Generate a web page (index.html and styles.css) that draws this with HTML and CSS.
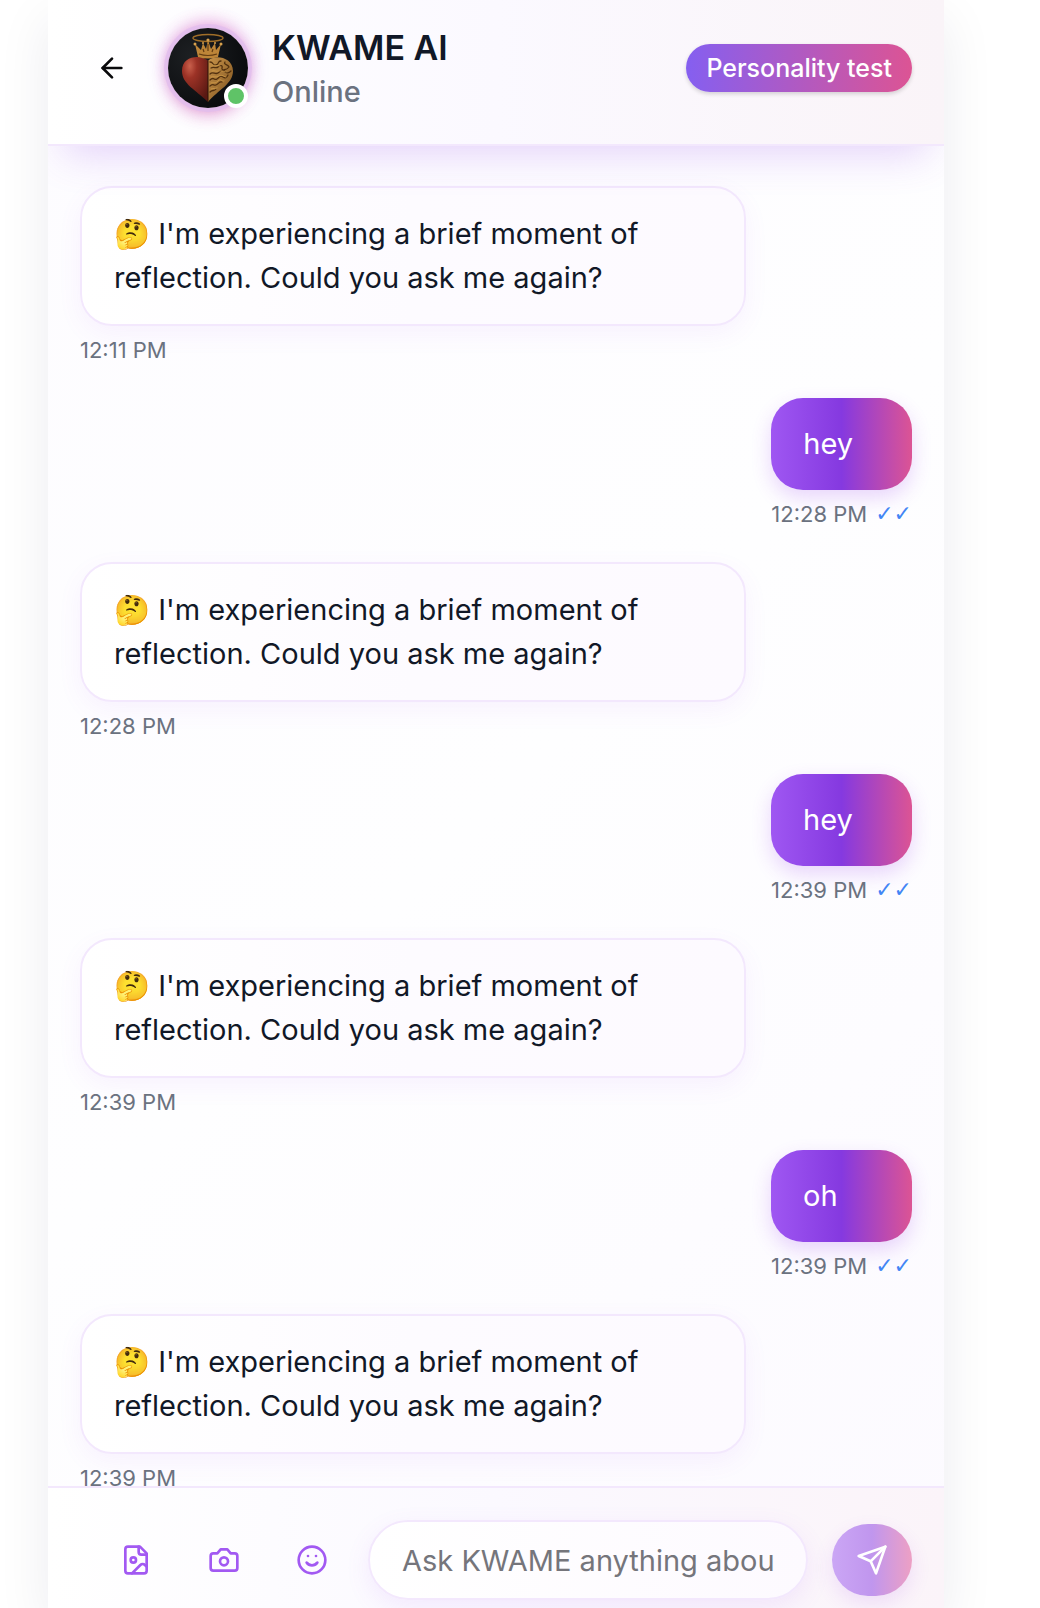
FILE: index.html
```html
<!DOCTYPE html>
<html lang="en">
<head>
<meta charset="utf-8">
<meta name="viewport" content="width=device-width, initial-scale=1">
<title>KWAME AI</title>
<link rel="stylesheet" href="styles.css">
</head>
<body>
<div class="app">
  <header class="header">
    <button class="icon-button back" type="button" aria-label="Back">
      <svg class="icon" viewBox="0 0 24 24"><path d="m12 19-7-7 7-7"/><path d="M19 12H5"/></svg>
    </button>
    <div class="avatar">
      <svg class="portrait" viewBox="0 0 80 80" aria-hidden="true">
        <defs>
          <radialGradient id="ground" cx=".3" cy=".35" r=".8"><stop offset="0" stop-color="#1d2023"/><stop offset="1" stop-color="#08090b"/></radialGradient>
          <radialGradient id="red" cx=".3" cy=".2" r=".9"><stop offset="0" stop-color="#c9604c"/><stop offset=".3" stop-color="#9c3226"/><stop offset="1" stop-color="#581812"/></radialGradient>
          <linearGradient id="gold" x1="0" y1="0" x2="1" y2="1"><stop offset="0" stop-color="#c8934a"/><stop offset="1" stop-color="#7d521e"/></linearGradient>
        </defs>
        <circle cx="40" cy="40" r="40" fill="url(#ground)"/>
        <path d="M40 33C35 27 14 26 14 43c0 13 14 19 26 31z" fill="url(#red)"/>
        <path d="M40 33c6-7 25-4 25 10 0 13-15 19-25 31z" fill="url(#gold)"/>
        <g fill="none" stroke="#51300f" stroke-width="1.3" stroke-linecap="round">
          <path d="M42 34c4 0 2 4 6 3s1-4 5-4M43 40c3-2 5 1 7-1s5-2 4 1 5 2 7-1M42 46c3-3 5 1 8-1s3-4 6-2 4 3 7 0M42 52c4-4 4 1 7-1s3-4 6-2 4 0 5-2M42 58c4-3 3 0 6-1s3-4 6-3M42 64c3-3 4 0 6-3M57 34c-2 3 3 2 4 5"/>
        </g>
        <g fill="none" stroke="#d5a04a" stroke-width=".7" stroke-linecap="round">
          <path d="M44 37c3 1 5 0 8 1M44 43c3-1 4 1 7 0s5 1 8 1M43 49c3-1 5 1 8-1s5 1 7 1M43 55c3-1 4 1 7-2s4 1 6 0M43 61c3-1 4 0 6-1"/>
        </g>
        <path d="M40 33v41" stroke="#2d1208" stroke-width="1"/>
        <ellipse cx="40" cy="10" rx="15" ry="3.500" fill="none" stroke="#a06e28" stroke-width="1.400"/>
        <path d="m30 29-3-13 6 6 2-7 3 6 2-9 3 9 4-6 1 7 5-6-3 13q-10 3-20 0z" fill="#bd8538"/>
        <path d="M31 26q9 3 18 0M35 21l1 3m4-8v7m5-2-1 3" fill="none" stroke="#633c12" stroke-width="1.200"/>
        <g fill="#d6a04d"><circle cx="27" cy="16" r="1.500"/><circle cx="35" cy="15" r="1"/><circle cx="40" cy="12" r="1.600"/><circle cx="47" cy="15" r="1"/><circle cx="53" cy="16" r="1.500"/></g>
      </svg>
      <span class="presence"></span>
    </div>
    <div class="identity">
      <h1 class="name">KWAME AI</h1>
      <p class="status">Online</p>
    </div>
    <button class="test-button" type="button">Personality test</button>
  </header>

  <main class="messages">
    <article class="message received">
      <p class="bubble">🤔 I'm experiencing a brief moment of reflection. Could you ask me again?</p>
      <p class="meta"><time>12:11 PM</time></p>
    </article>
    <article class="message sent">
      <p class="bubble">hey</p>
      <p class="meta"><time>12:28 PM</time><span class="ticks">✓✓</span></p>
    </article>
    <article class="message received">
      <p class="bubble">🤔 I'm experiencing a brief moment of reflection. Could you ask me again?</p>
      <p class="meta"><time>12:28 PM</time></p>
    </article>
    <article class="message sent">
      <p class="bubble">hey</p>
      <p class="meta"><time>12:39 PM</time><span class="ticks">✓✓</span></p>
    </article>
    <article class="message received">
      <p class="bubble">🤔 I'm experiencing a brief moment of reflection. Could you ask me again?</p>
      <p class="meta"><time>12:39 PM</time></p>
    </article>
    <article class="message sent">
      <p class="bubble">oh</p>
      <p class="meta"><time>12:39 PM</time><span class="ticks">✓✓</span></p>
    </article>
    <article class="message received">
      <p class="bubble">🤔 I'm experiencing a brief moment of reflection. Could you ask me again?</p>
      <p class="meta"><time>12:39 PM</time></p>
    </article>
  </main>

  <form class="composer">
    <button class="icon-button" type="button" aria-label="Attach image">
      <svg class="icon" viewBox="0 0 24 24"><path d="M15 2H6a2 2 0 0 0-2 2v16a2 2 0 0 0 2 2h12a2 2 0 0 0 2-2V7Z"/><path d="M14 2v4a2 2 0 0 0 2 2h4"/><circle cx="10" cy="12" r="2"/><path d="m20 17-1.296-1.296a2.410 2.410 0 0 0-3.408 0L9 22"/></svg>
    </button>
    <button class="icon-button" type="button" aria-label="Take photo">
      <svg class="icon" viewBox="0 0 24 24"><path d="M14.500 4h-5L7 7H4a2 2 0 0 0-2 2v9a2 2 0 0 0 2 2h16a2 2 0 0 0 2-2V9a2 2 0 0 0-2-2h-3l-2.500-3z"/><circle cx="12" cy="13" r="3"/></svg>
    </button>
    <button class="icon-button" type="button" aria-label="Add emoji">
      <svg class="icon" viewBox="0 0 24 24"><circle cx="12" cy="12" r="10"/><path d="M8 14s1.500 2 4 2 4-2 4-2"/><path d="M9 9h.01"/><path d="M15 9h.01"/></svg>
    </button>
    <input class="field" type="text" aria-label="Message" placeholder="Ask KWAME anything about yourself">
    <button class="send" type="submit" aria-label="Send">
      <svg class="icon" viewBox="0 0 24 24"><path d="m22 2-7 20-4-9-9-4Z"/><path d="M22 2 11 13"/></svg>
    </button>
  </form>
</div>
</body>
</html>
```
FILE: styles.css
```css
* {
  box-sizing: border-box;
}

body {
  margin: 0;
  background: #fff;
  color: #111827;
  font-family: Inter, "Noto Sans", sans-serif;
  font-size: 29px;
  line-height: 44px;
}

h1,
p {
  margin: 0;
}

button,
input {
  font: inherit;
  border: 0;
  padding: 0;
}

button {
  cursor: pointer;
}

.app {
  display: flex;
  flex-direction: column;
  height: 100vh;
  max-width: 896px;
  margin: 0 96px 0 48px;
  background: linear-gradient(135deg, #fdfcff, #fefeff 50%, #fcfaff);
  box-shadow: 0 20px 50px rgba(30, 20, 60, 0.08);
}

.header {
  position: relative;
  z-index: 1;
  flex: none;
  display: flex;
  align-items: center;
  gap: 24px;
  padding: 24px 32px 32px;
  border-bottom: 2px solid #f3e8fd;
  background: linear-gradient(90deg, #fff, #fbf9ff 50%, #faf4f8);
  box-shadow: 0 24px 40px -16px rgba(147, 70, 234, 0.24);
  clip-path: inset(0 0 -80px);
}

.icon-button {
  flex: none;
  display: flex;
  align-items: center;
  justify-content: center;
  width: 64px;
  height: 64px;
  border-radius: 32px;
  background: none;
  color: #a259f2;
}

.back {
  color: #09090b;
}

.icon {
  width: 32px;
  height: 32px;
  fill: none;
  stroke: currentColor;
  stroke-width: 2;
  stroke-linecap: round;
  stroke-linejoin: round;
}

.avatar {
  position: relative;
  flex: none;
  width: 80px;
  height: 80px;
  border-radius: 50%;
  box-shadow: 0 0 0 4px rgba(225, 190, 238, 0.8), 0 -8px 16px rgba(236, 72, 153, 0.24), 0 8px 16px rgba(219, 39, 119, 0.26), 0 0 20px rgba(147, 51, 234, 0.4);
}

.portrait {
  display: block;
  width: 100%;
  height: 100%;
}

.presence {
  position: absolute;
  right: 0;
  bottom: 0;
  width: 24px;
  height: 24px;
  border: 4px solid #fff;
  border-radius: 50%;
  background: #5fc367;
}

.identity {
  flex: 1;
  min-width: 0;
}

.name {
  font-size: 34px;
  font-weight: 600;
  line-height: 48px;
}

.status {
  color: #6b7280;
  font-weight: 500;
  line-height: 40px;
}

.test-button {
  flex: none;
  height: 48px;
  padding: 0 20px;
  border-radius: 24px;
  background: linear-gradient(90deg, #855ff0, #dc5494);
  box-shadow: 0 2px 4px rgba(0, 0, 0, 0.16);
  color: #fff;
  font-size: 25px;
  font-weight: 500;
}

.messages {
  flex: 1;
  min-height: 0;
  display: flex;
  flex-direction: column;
  gap: 32px;
  padding: 40px 32px 0;
  overflow: hidden;
}

.message {
  flex: none;
  display: flex;
  flex-direction: column;
  gap: 8px;
}

.received {
  align-self: flex-start;
  width: 80%;
}

.sent {
  align-self: flex-end;
}

.bubble {
  padding: 24px 32px;
  border-radius: 32px;
}

.received .bubble {
  border: 2px solid #f3e8fd;
  background: linear-gradient(90deg, #fff, #fdfbff 50%, #fdfaff);
  box-shadow: 0 8px 24px rgba(168, 85, 247, 0.07);
}

.sent .bubble {
  background: linear-gradient(90deg, #9f57f2, #8539e0 50%, #dc5494);
  box-shadow: 0 8px 20px rgba(147, 51, 234, 0.2);
  color: #fff;
}

.meta {
  display: flex;
  gap: 8px;
  color: #6b7280;
  font-size: 22px;
  line-height: 32px;
}

.ticks {
  color: #4285f5;
  font-family: "DejaVu Sans", sans-serif;
  font-weight: 700;
}

.composer {
  flex: none;
  display: flex;
  align-items: center;
  gap: 24px;
  padding: 32px 32px 8px 56px;
  border-top: 2px solid #f3e8fd;
  background: linear-gradient(90deg, #fff, #fbf9ff 50%, #fbf4f9);
}

.field {
  flex: 1;
  min-width: 0;
  height: 80px;
  padding: 0 32px;
  border: 2px solid #f3e8fd;
  border-radius: 40px;
  background: linear-gradient(90deg, #fff, #fdfaff);
  box-shadow: 0 8px 24px rgba(168, 85, 247, 0.1);
  color: #111827;
}

.field::placeholder {
  color: #75757b;
  opacity: 1;
}

.send {
  flex: none;
  display: flex;
  align-items: center;
  justify-content: center;
  width: 80px;
  height: 72px;
  border-radius: 36px;
  background: linear-gradient(90deg, #cba6f5, #c096ee 50%, #eda0c4);
  box-shadow: 0 8px 20px rgba(147, 51, 234, 0.12);
  color: #fff;
}
```
